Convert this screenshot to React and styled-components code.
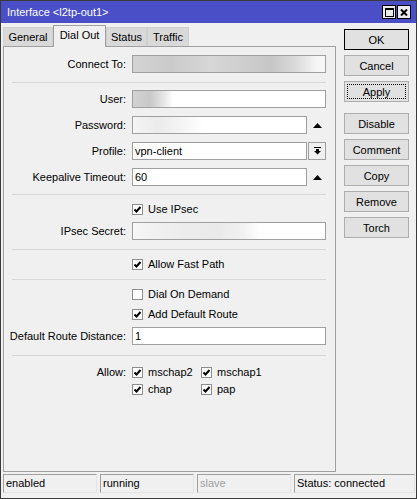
import React from "react";
import styled, { createGlobalStyle } from "styled-components";

const GlobalStyle = createGlobalStyle`
  html, body {
    margin: 0;
    padding: 0;
    background: #f0f0f0;
  }
  body {
    font-family: "Liberation Sans", Arial, sans-serif;
    font-size: 11px;
    color: #000;
  }
`;

const blurs = {
  connect:
    "linear-gradient(90deg, #d3d3d3 0%, #cbcbcb 20%, #d7d7d7 40%, #d0d0d0 55%, #c6c6c6 72%, #dcdcdc 86%, #f7f7f7 96%)",
  user: "linear-gradient(90deg, #d2d2d2 0%, #c9c9c9 9%, #e6e6e6 16%, #ffffff 21%)",
  password:
    "linear-gradient(90deg, #f4f4f4 0%, #ebebeb 14%, #f6f6f6 30%, #ffffff 40%)",
  secret:
    "linear-gradient(90deg, #f6f6f6 0%, #ececec 25%, #eaeaea 45%, #f2f2f2 58%, #ffffff 66%)",
};

export default function App() {
  return (
    <>
      <GlobalStyle />
      <Window>
        <TitleBar>
          <Title>Interface &lt;l2tp-out1&gt;</Title>
          <CaptionButtons>
            <CaptionButton>
              <svg width="9" height="9" viewBox="0 0 9 9">
                <rect x="0.5" y="0.5" width="8" height="8" fill="none" stroke="#000" />
                <rect x="0" y="0" width="9" height="2" fill="#000" />
              </svg>
            </CaptionButton>
            <CaptionButton>
              <svg width="8" height="7" viewBox="0 0 8 7">
                <path d="M1 0.5 L7 6.5 M7 0.5 L1 6.5" stroke="#000" strokeWidth="2" />
              </svg>
            </CaptionButton>
          </CaptionButtons>
        </TitleBar>

        <Body>
          <Main>
            <Tabs>
              <Tab $w={50}>General</Tab>
              <Tab $w={53} $active>
                Dial Out
              </Tab>
              <Tab $w={41}>Status</Tab>
              <Tab $w={42}>Traffic</Tab>
            </Tabs>
            <Panel>
              <Row $mt={8}>
                <Label>Connect To:</Label>
                <Input $bg={blurs.connect} />
              </Row>
              <Sep $mt={9} />
              <Row $mt={7}>
                <Label>User:</Label>
                <Input $bg={blurs.user} />
              </Row>
              <Row $mt={8}>
                <Label>Password:</Label>
                <Combo>
                  <Input $bg={blurs.password} />
                  <Slot>
                    <UpArrow />
                  </Slot>
                </Combo>
              </Row>
              <Row $mt={8}>
                <Label>Profile:</Label>
                <Combo>
                  <Input>vpn-client</Input>
                  <DropButton>
                    <svg width="7" height="8" viewBox="0 0 7 8">
                      <rect x="0" y="0" width="7" height="1" fill="#000" />
                      <rect x="2" y="2" width="3" height="2" fill="#000" />
                      <polygon points="0,4 7,4 3.5,7.5" fill="#000" />
                    </svg>
                  </DropButton>
                </Combo>
              </Row>
              <Row $mt={8}>
                <Label>Keepalive Timeout:</Label>
                <Combo>
                  <Input>60</Input>
                  <Slot>
                    <UpArrow />
                  </Slot>
                </Combo>
              </Row>
              <Sep $mt={8} />
              <Row $mt={7} $h={14}>
                <span />
                <Check checked label="Use IPsec" />
              </Row>
              <Row $mt={6}>
                <Label>IPsec Secret:</Label>
                <Input $bg={blurs.secret} />
              </Row>
              <Sep $mt={9} />
              <Row $mt={7} $h={14}>
                <span />
                <Check checked label="Allow Fast Path" />
              </Row>
              <Sep $mt={8} />
              <Row $mt={7} $h={14}>
                <span />
                <Check label="Dial On Demand" />
              </Row>
              <Row $mt={6} $h={14}>
                <span />
                <Check checked label="Add Default Route" />
              </Row>
              <Row $mt={6}>
                <Label>Default Route Distance:</Label>
                <Input>1</Input>
              </Row>
              <Sep $mt={10} />
              <Row $mt={9} $h={14}>
                <Label>Allow:</Label>
                <CheckGrid>
                  <Check checked label="mschap2" />
                  <Check checked label="mschap1" />
                </CheckGrid>
              </Row>
              <Row $mt={3} $h={14}>
                <span />
                <CheckGrid>
                  <Check checked label="chap" />
                  <Check checked label="pap" />
                </CheckGrid>
              </Row>
            </Panel>
          </Main>

          <ButtonCol>
            <Button $default>OK</Button>
            <Button>Cancel</Button>
            <Button $focus>Apply</Button>
            <Button $mt={6}>Disable</Button>
            <Button>Comment</Button>
            <Button>Copy</Button>
            <Button>Remove</Button>
            <Button>Torch</Button>
          </ButtonCol>
        </Body>

        <StatusBar>
          <Cell $w={94}>enabled</Cell>
          <Cell $w={94}>running</Cell>
          <Cell $w={94} $dim>
            slave
          </Cell>
          <Cell $w={121}>Status: connected</Cell>
        </StatusBar>
      </Window>
    </>
  );
}

function UpArrow() {
  return (
    <svg width="9" height="5" viewBox="0 0 9 5">
      <polygon points="0,5 4.5,0 9,5" fill="#000" />
    </svg>
  );
}

function Check({ checked, label }) {
  return (
    <CheckItem>
      <Box>
        {checked && (
          <svg width="9" height="9" viewBox="0 0 9 9">
            <path d="M1.5 4.5 L3.5 6.5 L7.5 2" fill="none" stroke="#000" strokeWidth="2" />
          </svg>
        )}
      </Box>
      {label}
    </CheckItem>
  );
}

const Window = styled.div`
  width: 417px;
  height: 499px;
  box-sizing: border-box;
  border: 1px solid #3a3a3a;
  background: #f0f0f0;
  display: flex;
  flex-direction: column;
`;

const TitleBar = styled.div`
  flex: none;
  height: 22px;
  background: #4a4fc8;
  color: #fff;
  display: flex;
  align-items: center;
  justify-content: space-between;
  padding: 0 5px 0 6px;
`;

const Title = styled.span`
  font-size: 11px;
  white-space: nowrap;
`;

const CaptionButtons = styled.div`
  display: flex;
  gap: 1px;
`;

const CaptionButton = styled.div`
  width: 14px;
  height: 14px;
  box-sizing: border-box;
  border: 1px solid #000;
  background: #ececec;
  display: flex;
  align-items: center;
  justify-content: center;
`;

const Body = styled.div`
  flex: 1;
  min-height: 0;
  display: flex;
  gap: 8px;
  padding-left: 2px;
`;

const Main = styled.div`
  width: 333px;
  display: flex;
  flex-direction: column;
`;

const Tabs = styled.div`
  height: 23px;
  flex: none;
  display: flex;
  align-items: flex-end;
  position: relative;
  z-index: 1;
`;

const Tab = styled.div`
  width: ${(p) => p.$w}px;
  box-sizing: border-box;
  height: ${(p) => (p.$active ? 22 : 19)}px;
  margin-bottom: ${(p) => (p.$active ? -1 : 0)}px;
  border: 1px solid ${(p) => (p.$active ? "#a0a0a0" : "#d0d0d0")};
  border-bottom: none;
  background: ${(p) => (p.$active ? "#f0f0f0" : "#d9d9d9")};
  display: flex;
  align-items: center;
  justify-content: center;
  padding-bottom: ${(p) => (p.$active ? 3 : 0)}px;
  white-space: nowrap;
`;

const Panel = styled.div`
  flex: 1;
  border: 1px solid #a0a0a0;
  background: #f0f0f0;
  display: flex;
  flex-direction: column;
`;

const Row = styled.div`
  display: grid;
  grid-template-columns: 122px 194px;
  column-gap: 6px;
  align-items: center;
  height: ${(p) => p.$h || 18}px;
  margin-top: ${(p) => p.$mt}px;
`;

const Label = styled.div`
  text-align: right;
  white-space: nowrap;
`;

const Input = styled.div`
  height: 18px;
  box-sizing: border-box;
  border: 1px solid #a0a0a0;
  background: ${(p) => p.$bg || "#fff"};
  padding: 0 2px;
  line-height: 16px;
  flex: 1;
  min-width: 0;
`;

const Combo = styled.div`
  display: flex;
  gap: 1px;
`;

const Slot = styled.div`
  width: 18px;
  height: 18px;
  display: flex;
  align-items: center;
  justify-content: center;
`;

const DropButton = styled(Slot)`
  box-sizing: border-box;
  border: 1px solid #a0a0a0;
  background: #f0f0f0;
`;

const Sep = styled.div`
  height: 1px;
  width: 314px;
  margin: ${(p) => p.$mt}px 0 0 8px;
  background: #d8d8d8;
`;

const CheckItem = styled.label`
  display: flex;
  align-items: center;
  gap: 5px;
  white-space: nowrap;
`;

const Box = styled.span`
  width: 11px;
  height: 11px;
  box-sizing: border-box;
  border: 1px solid #8e8e8e;
  background: #fff;
  display: flex;
  align-items: center;
  justify-content: center;
`;

const CheckGrid = styled.div`
  display: grid;
  grid-template-columns: 69px 69px;
`;

const ButtonCol = styled.div`
  width: 65px;
  padding-top: 6px;
  display: flex;
  flex-direction: column;
  gap: 5px;
`;

const Button = styled.div`
  height: 21px;
  box-sizing: border-box;
  margin-top: ${(p) => p.$mt || 0}px;
  border: 1px solid ${(p) => (p.$default ? "#000" : "#adadad")};
  background: #e1e1e1;
  display: flex;
  align-items: center;
  justify-content: center;
  outline: ${(p) => (p.$focus ? "1px dotted #000" : "none")};
  outline-offset: -4px;
`;

const StatusBar = styled.div`
  flex: none;
  height: 19px;
  margin: 2px 0 5px 2px;
  display: flex;
  gap: 3px;
`;

const Cell = styled.div`
  width: ${(p) => p.$w}px;
  box-sizing: border-box;
  border: 1px solid;
  border-color: #a0a0a0 #e4e4e4 #e4e4e4 #a0a0a0;
  padding-left: 2px;
  line-height: 17px;
  color: ${(p) => (p.$dim ? "#a0a0a0" : "#000")};
  white-space: nowrap;
`;
